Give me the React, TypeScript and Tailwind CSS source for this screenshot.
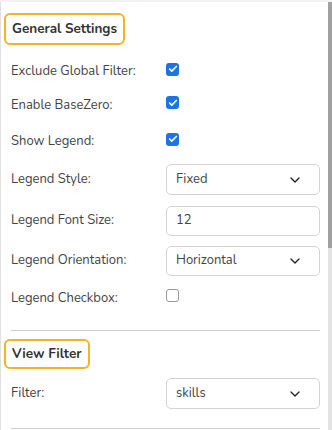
import { ChevronDown, Check } from "lucide-react";

const font = { fontFamily: "Nunito, Lato, 'Noto Sans', sans-serif" };

function Label({ children }: { children: React.ReactNode }) {
  return <div className="w-[155px] text-[13px] text-[#444]">{children}</div>;
}

function CheckBox({ checked }: { checked: boolean }) {
  return checked ? (
    <div className="mb-[6px] flex h-[13px] w-[13px] items-center justify-center rounded-[3px] bg-[#1a73e8]">
      <Check className="h-[10px] w-[10px] text-white" strokeWidth={4} />
    </div>
  ) : (
    <div className="mb-[6px] h-[13px] w-[13px] rounded-[3px] border border-[#999] bg-white" />
  );
}

function Select({ value }: { value: string }) {
  return (
    <div className="flex h-full w-[154px] items-center justify-between rounded-[5px] border border-[#d4d4d4] pl-[9px] pr-[16px] text-[13px] text-[#444]">
      <span>{value}</span>
      <ChevronDown className="h-[16px] w-[16px] text-[#222]" strokeWidth={2} />
    </div>
  );
}

export default function App() {
  return (
    <div className="flex h-[430px] w-[332px] flex-col bg-[#f3f3f3] pt-[2px]" style={font}>
      <div className="flex flex-1 overflow-hidden">
        <div className="flex-1 border-l border-[#e0e0e0] bg-white pl-[3px] pr-[8px]">
          {/* General Settings */}
          <div className="mt-[11px] inline-flex h-[32px] items-center rounded-[6px] border-2 border-[#f2b32a] px-[6px] text-[13.5px] font-bold text-[#333]">
            General Settings
          </div>

          <div className="pl-[7px]">
            <div className="mt-[10px] flex h-[34px] items-center">
              <Label>Exclude Global Filter:</Label>
              <CheckBox checked />
            </div>
            <div className="flex h-[33px] items-center">
              <Label>Enable BaseZero:</Label>
              <CheckBox checked />
            </div>
            <div className="flex h-[40px] items-center">
              <Label>Show Legend:</Label>
              <CheckBox checked />
            </div>
            <div className="mt-[2px] flex h-[31px] items-center">
              <Label>Legend Style:</Label>
              <Select value="Fixed" />
            </div>
            <div className="mt-[11px] flex h-[30px] items-center">
              <Label>Legend Font Size:</Label>
              <div className="flex h-full w-[154px] items-center rounded-[5px] border border-[#d4d4d4] pl-[9px] text-[13px] text-[#444]">
                12
              </div>
            </div>
            <div className="mt-[10px] flex h-[30px] items-center">
              <Label>Legend Orientation:</Label>
              <Select value="Horizontal" />
            </div>
            <div className="flex h-[45px] items-center">
              <Label>Legend Checkbox:</Label>
              <CheckBox checked={false} />
            </div>
            <div className="mt-[9px] border-t border-[#cfcfcf]" />
          </div>

          {/* View Filter */}
          <div className="mt-[8px] inline-flex h-[30px] items-center rounded-[6px] border-2 border-[#f2b32a] px-[6px] text-[13.5px] font-bold text-[#333]">
            View Filter
          </div>

          <div className="pl-[7px]">
            <div className="mt-[9px] flex h-[31px] items-center">
              <Label>Filter:</Label>
              <Select value="skills" />
            </div>
            <div className="mt-[19px] border-t border-[#cfcfcf]" />
          </div>
        </div>

        {/* scrollbar */}
        <div className="flex w-[4px] flex-col bg-white">
          <div className="h-[246px] bg-[#a0a0a0]" />
          <div className="flex-1 bg-[#e3e3e3]" />
        </div>
      </div>
    </div>
  );
}
